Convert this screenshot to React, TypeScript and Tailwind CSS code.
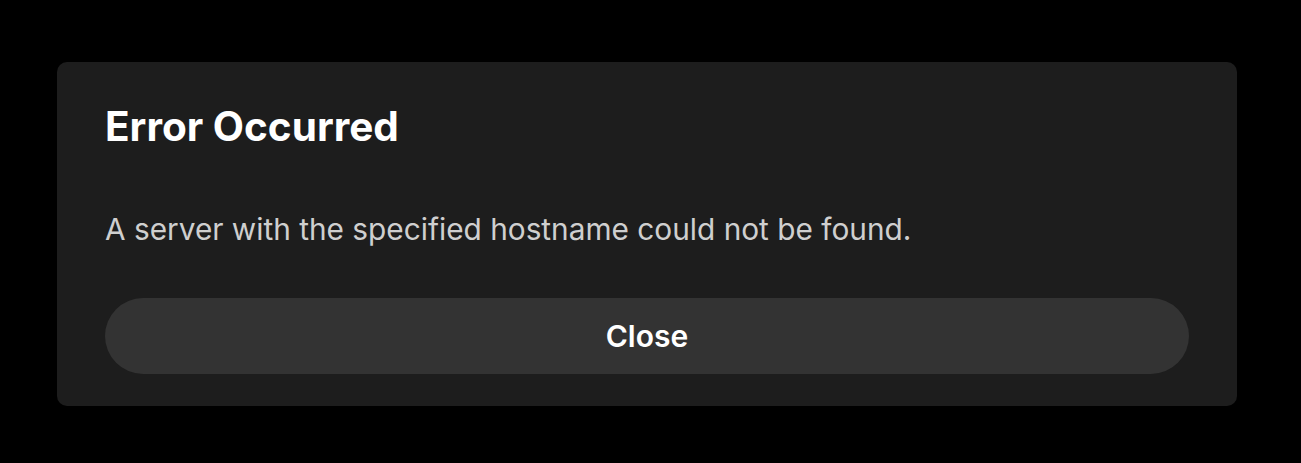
import React from 'react';

const App: React.FC = () => {
  return (
    <div className="min-h-screen w-full bg-black px-[57px] pt-[62px] font-['Inter',sans-serif]">
      {/* Error dialog */}
      <div className="w-[1180px] rounded-[10px] bg-[#1d1d1d] px-12 pt-[41px] pb-8">
        <h1 className="text-[40.5px] font-bold leading-[48px] text-white">Error Occurred</h1>
        <p className="mt-[58px] text-[29.8px] leading-[40px] text-[#cfcfcf]">
          A server with the specified hostname could not be found.
        </p>
        <button className="mt-[49px] flex h-[76px] w-full items-center justify-center rounded-full bg-[#333333] text-[30px] font-semibold text-white">
          Close
        </button>
      </div>
    </div>
  );
};

export default App;
